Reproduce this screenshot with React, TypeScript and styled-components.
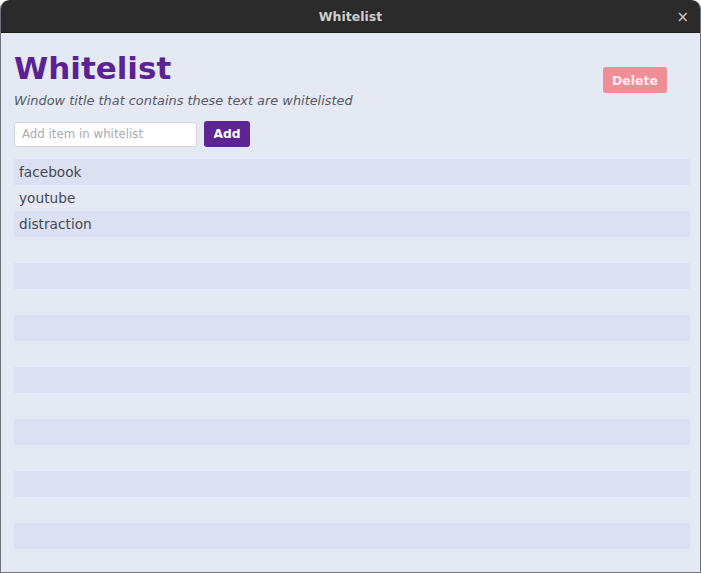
import React from "react";
import styled, { createGlobalStyle } from "styled-components";

const Global = createGlobalStyle`
  html, body { margin: 0; padding: 0; background: #ffffff; }
  body { font-family: "DejaVu Sans", Verdana, sans-serif; }
  * { box-sizing: border-box; }
`;

const Window = styled.div`
  width: 701px;
  height: 573px;
  display: flex;
  flex-direction: column;
  overflow: hidden;
  border-radius: 9px 9px 0 0;
  background: #e5e9f4;
  border: 1px solid #6f7279;
  border-top: none;
`;

const TitleBar = styled.div`
  height: 33px;
  flex: none;
  background: #2b2b2b;
  border-bottom: 1px solid #1c1c1c;
  border-radius: 9px 9px 0 0;
  margin: 0 -1px;
  display: flex;
  align-items: center;
  justify-content: center;
  position: relative;
  color: #cfcfcf;
  font-weight: bold;
  font-size: 12.5px;
`;

const Close = styled.span`
  position: absolute;
  right: 12px;
  top: 8px;
  font-size: 15px;
  font-weight: normal;
  color: #c9c9c9;
`;

const Content = styled.div`
  flex: 1;
  padding: 16px 10px 0 13px;
  display: flex;
  flex-direction: column;
  overflow: hidden;
`;

const Header = styled.div`
  display: flex;
  justify-content: space-between;
  align-items: flex-start;
`;

const HeaderText = styled.div`
  display: flex;
  flex-direction: column;
`;

const Heading = styled.h1`
  margin: 0;
  font-size: 31px;
  line-height: 38px;
  font-weight: bold;
  color: #5b2391;
`;

const Subtitle = styled.p`
  margin: 5px 0 0 0;
  font-size: 12.9px;
  line-height: 17px;
  font-style: italic;
  color: #55585f;
`;

const DeleteButton = styled.button`
  margin: 18px 23px 0 0;
  width: 64px;
  height: 26px;
  border: none;
  border-radius: 3px;
  background: #ef8f95;
  color: #fcecee;
  font-family: inherit;
  font-weight: bold;
  font-size: 12.5px;
  padding: 0;
`;

const AddRow = styled.div`
  display: flex;
  gap: 7px;
  margin-top: 12px;
  align-items: center;
`;

const Input = styled.input`
  width: 183px;
  height: 25px;
  border: 1px solid #d3d5db;
  border-radius: 3px;
  background: #ffffff;
  font-family: inherit;
  font-size: 11.8px;
  padding: 0 7px;
  outline: none;
  &::placeholder { color: #a9abb0; }
`;

const AddButton = styled.button`
  width: 46px;
  height: 26px;
  border: none;
  border-radius: 3px;
  background: #5c2593;
  color: #ffffff;
  font-family: inherit;
  font-weight: bold;
  font-size: 12.3px;
  padding: 0;
`;

const List = styled.ul`
  list-style: none;
  margin: 12px 0 0 0;
  padding: 0;
`;

const Row = styled.li<{ $striped: boolean }>`
  height: 26px;
  display: flex;
  align-items: center;
  padding-left: 5px;
  font-size: 13.7px;
  color: #45474c;
  background: ${(p) => (p.$striped ? "#dbe1f3" : "transparent")};
`;

const items = ["facebook", "youtube", "distraction"];
const rows = Array.from({ length: 16 }, (_, i) => items[i] ?? "");

export default function App() {
  return (
    <>
      <Global />
      <Window>
        <TitleBar>
          Whitelist
          <Close>×</Close>
        </TitleBar>
        <Content>
          <Header>
            <HeaderText>
              <Heading>Whitelist</Heading>
              <Subtitle>Window title that contains these text are whitelisted</Subtitle>
              <AddRow>
                <Input placeholder="Add item in whitelist" />
                <AddButton>Add</AddButton>
              </AddRow>
            </HeaderText>
            <DeleteButton>Delete</DeleteButton>
          </Header>
          <List>
            {rows.map((t, i) => (
              <Row key={i} $striped={i % 2 === 0}>
                {t}
              </Row>
            ))}
          </List>
        </Content>
      </Window>
    </>
  );
}
